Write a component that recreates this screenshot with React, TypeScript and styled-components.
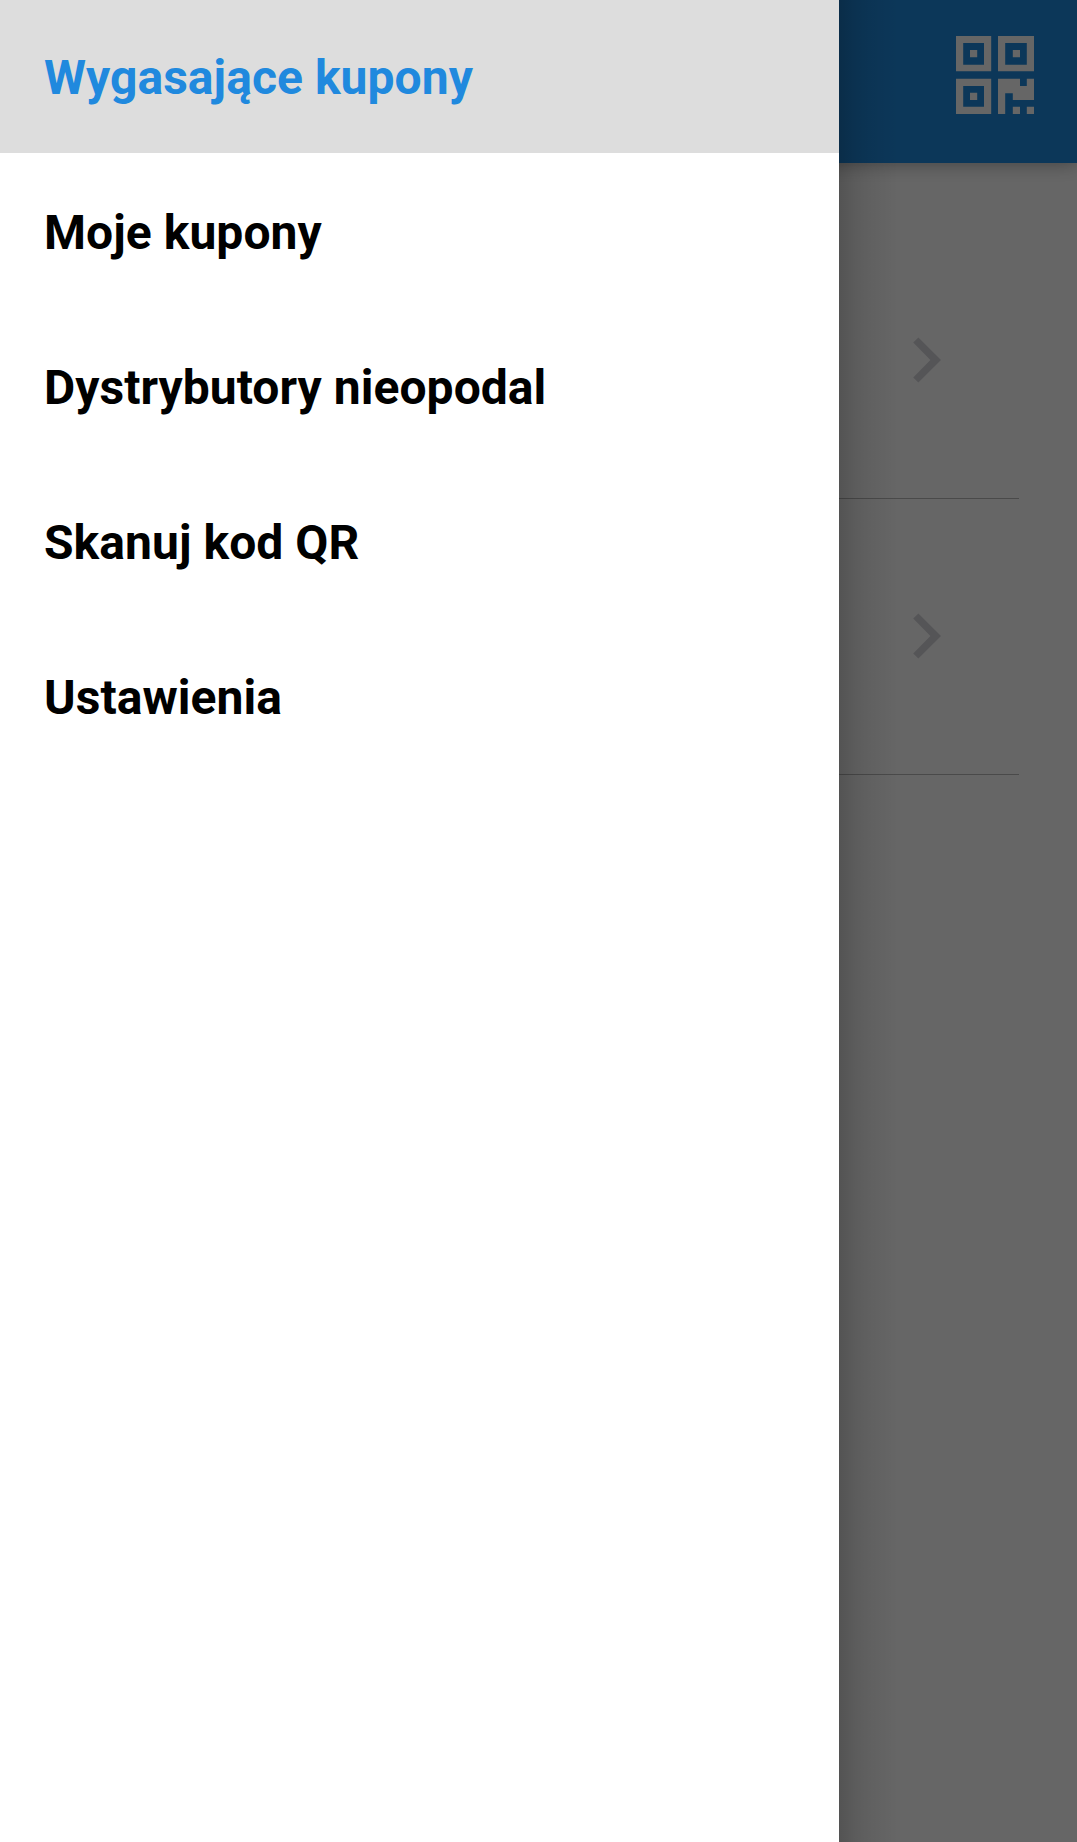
import React from "react";
import styled, { createGlobalStyle } from "styled-components";

const GlobalStyle = createGlobalStyle`
  *, *::before, *::after { box-sizing: border-box; }
  body { margin: 0; font-family: Roboto, "Noto Sans", sans-serif; }
`;

const Screen = styled.div`
  position: relative;
  display: flex;
  flex-direction: column;
  height: 1842px;
  overflow: hidden;
  background: #fff;
`;

const AppBar = styled.header`
  display: flex;
  flex: none;
  justify-content: flex-end;
  height: 163px;
  padding: 36px 43px 0 0;
  background: #1e8ade;
  box-shadow: 0 0 18px rgba(0, 0, 0, 0.38);
`;

const QrButton = styled.button`
  width: 78px;
  height: 78px;
  padding: 0;
  border: 0;
  background: none;
  color: #fff;

  svg { display: block; }
`;

const CouponList = styled.main`
  display: flex;
  flex-direction: column;
  padding: 60px 58px 0;
`;

const CouponRow = styled.div`
  display: flex;
  align-items: center;
  justify-content: flex-end;
  height: 276px;
  padding: 0 78px 1px 0;
  border-bottom: 1px solid #b9b9b9;
  color: #d5d5da;

  svg { display: block; }
`;

const Scrim = styled.div`
  position: absolute;
  inset: 0;
  background: rgba(0, 0, 0, 0.6);
`;

const Drawer = styled.nav`
  position: absolute;
  inset: 0 auto 0 0;
  display: flex;
  flex-direction: column;
  gap: 2px;
  width: 839px;
  background: #fff;
`;

const DrawerShadow = styled.div`
  position: absolute;
  inset: 0 auto 0 100%;
  width: 60px;
  background: linear-gradient(
    to right,
    rgba(0, 0, 0, 0.19) 0,
    rgba(0, 0, 0, 0.1) 16px,
    rgba(0, 0, 0, 0.05) 33px,
    rgba(0, 0, 0, 0) 60px
  );
`;

const DrawerItem = styled.a<{ $active?: boolean }>`
  display: flex;
  align-items: center;
  height: 153px;
  padding: 3px 44px 0;
  background: ${({ $active }) => ($active ? "#ddd" : "#fff")};
  color: ${({ $active }) => ($active ? "#2089de" : "#000")};
  font-size: 48px;
  font-weight: 700;
  line-height: 56px;
  letter-spacing: 0.05px;
  white-space: nowrap;
`;

const items = [
  "Wygasające kupony",
  "Moje kupony",
  "Dystrybutory nieopodal",
  "Skanuj kod QR",
  "Ustawienia",
];

function QrIcon() {
  return (
    <svg width="78" height="78" viewBox="0 0 78 78" fill="currentColor" fillRule="evenodd">
      <path d="M0 0H35.2V35.2H0zM7.2 7V28.8H28V7zM14 14H21.2V21.2H14z" />
      <path d="M42 0H78V35.2H42zM49.2 7V28.8H70.8V7zM56.8 14H64V21.2H56.8z" />
      <path d="M0 42.8H35.2V78H0zM7.2 50V70.8H28V50zM14 56.8H21.2V64H14z" />
      <path d="M42 42.8H64V50H70.8V42.8H78V64H56.8V57.2H49.2V78H42zM56.8 70.8H64V78H56.8zM70.8 70.8H78V78H70.8z" />
    </svg>
  );
}

function Chevron() {
  return (
    <svg width="28" height="46" viewBox="0 0 28 46" fill="currentColor">
      <path d="M5.4 .4 28 23 5.4 45.6.2 40.4 17.4 23 .2 5.6z" />
    </svg>
  );
}

export default function App() {
  return (
    <>
      <GlobalStyle />
      <Screen>
        <AppBar>
          <QrButton aria-label="Skanuj kod QR">
            <QrIcon />
          </QrButton>
        </AppBar>
        <CouponList>
          <CouponRow>
            <Chevron />
          </CouponRow>
          <CouponRow>
            <Chevron />
          </CouponRow>
        </CouponList>
        <Scrim />
        <Drawer>
          {items.map((label, index) => (
            <DrawerItem key={label} $active={index === 0}>
              {label}
            </DrawerItem>
          ))}
          <DrawerShadow />
        </Drawer>
      </Screen>
    </>
  );
}
